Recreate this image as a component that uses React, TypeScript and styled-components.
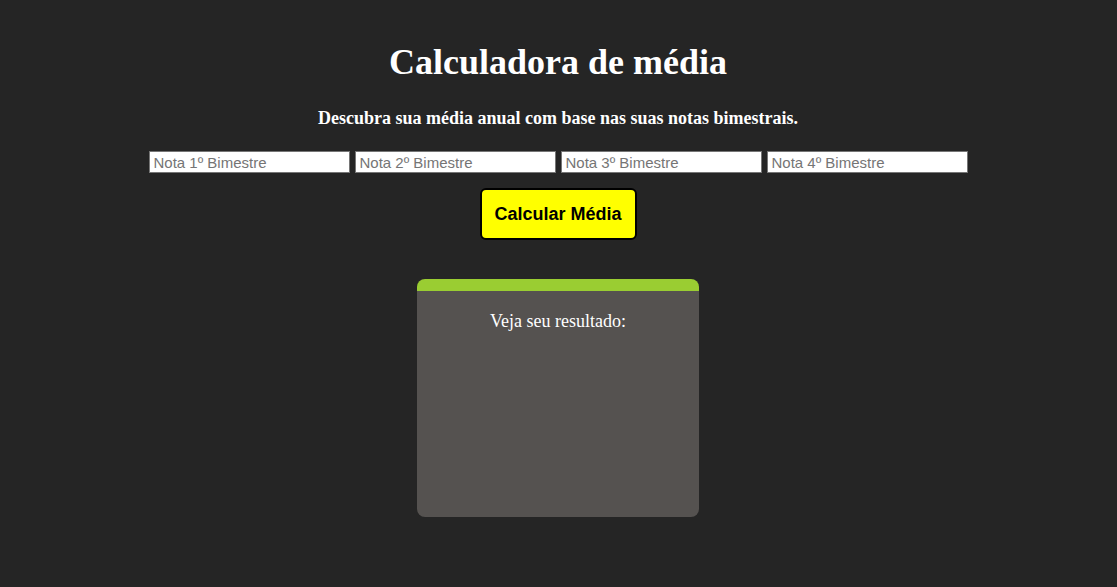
import React from "react";
import styled, { createGlobalStyle } from "styled-components";

const Global = createGlobalStyle`
  html, body { margin: 0; padding: 0; background: #252525; }
  body { font-family: "Liberation Serif", "Times New Roman", serif; color: #fff; }
`;

const Page = styled.main`
  display: flex;
  flex-direction: column;
  align-items: center;
  padding: 40px 1px 0 0;
  min-height: 587px;
  box-sizing: border-box;
`;

const Title = styled.h1`
  margin: 0;
  font-size: 36px;
  font-weight: bold;
  line-height: 44px;
`;

const Subtitle = styled.p`
  margin: 24px 0 0;
  font-size: 18px;
  font-weight: bold;
  line-height: 21px;
`;

const Inputs = styled.div`
  display: flex;
  gap: 5px;
  margin-top: 22px;
`;

const Input = styled.input`
  box-sizing: border-box;
  width: 201px;
  height: 22px;
  border: 1px solid #767676;
  padding: 1px 4px;
  font-family: "Liberation Sans", Arial, sans-serif;
  font-size: 15px;
  background: #fff;
  color: #000;
  &::placeholder { color: #757575; }
`;

const Button = styled.button`
  margin-top: 15px;
  width: 157px;
  height: 52px;
  background: #ffff00;
  border: 2px solid #000;
  border-radius: 6px;
  font-family: "Liberation Sans", Arial, sans-serif;
  font-size: 18px;
  font-weight: bold;
  color: #000;
  cursor: pointer;
`;

const Card = styled.section`
  margin-top: 39px;
  width: 282px;
  height: 238px;
  box-sizing: border-box;
  background: #555250;
  border-top: 12px solid #9acd32;
  border-radius: 8px;
  display: flex;
  flex-direction: column;
  align-items: center;
`;

const CardText = styled.p`
  margin: 19px 0 0;
  font-size: 18px;
  line-height: 22px;
`;

export default function App() {
  return (
    <>
      <Global />
      <Page>
        <Title>Calculadora de média</Title>
        <Subtitle>Descubra sua média anual com base nas suas notas bimestrais.</Subtitle>
        <Inputs>
          <Input type="number" placeholder="Nota 1º Bimestre" />
          <Input type="number" placeholder="Nota 2º Bimestre" />
          <Input type="number" placeholder="Nota 3º Bimestre" />
          <Input type="number" placeholder="Nota 4º Bimestre" />
        </Inputs>
        <Button>Calcular Média</Button>
        <Card>
          <CardText>Veja seu resultado:</CardText>
        </Card>
      </Page>
    </>
  );
}
